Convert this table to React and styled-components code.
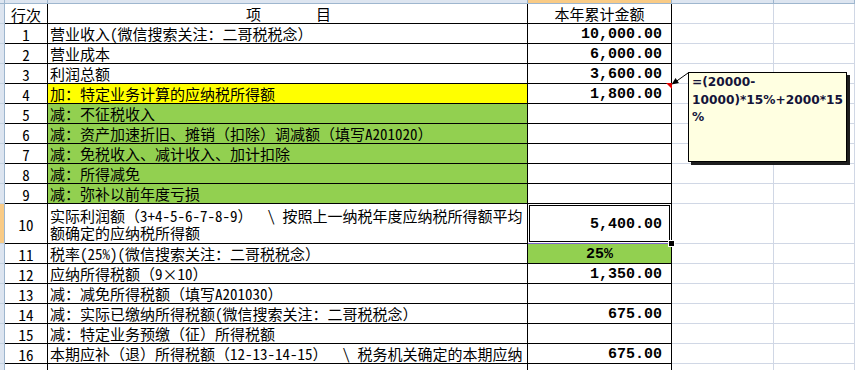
import React from 'react';
import styled, { createGlobalStyle, css } from 'styled-components';

const GlobalStyle = createGlobalStyle`
  html, body { margin: 0; padding: 0; background: #fff; overflow: hidden; }
  body { width: 855px; height: 370px; }
`;

const CJK = `"Noto Sans Mono CJK SC", "Noto Sans CJK SC", sans-serif`;
const HEAD_BG = '#dde5f0';
const HEAD_LINE = '#9eb6ce';
const ACTIVE = '#f9cb86';
const GRID = '#d0d7e5';
const FILLS = { yellow: '#ffff00', green: '#92d050' };

const Sheet = styled.div`
  position: relative;
  width: 855px;
  height: 370px;
  overflow: hidden;
  display: grid;
  grid-template-columns: 5px 43px 480px 144px 102px 1fr;
  grid-template-rows: 4px repeat(10, 20px) 40px repeat(6, 20px) 20px;
  font-family: ${CJK};
  font-size: 15px;
  line-height: 16px;
  color: #000;
`;

const box = css`
  box-sizing: border-box;
  border-right: 1px solid ${GRID};
  border-bottom: 1px solid ${GRID};
  min-width: 0;
  overflow: hidden;
  white-space: pre;
`;

const ColHead = styled.div`
  ${box};
  background: ${p => (p.$active ? ACTIVE : HEAD_BG)};
  border-color: ${HEAD_LINE};
`;

const RowHead = styled.div`
  ${box};
  background: ${p => (p.$active ? ACTIVE : HEAD_BG)};
  border-right-color: ${HEAD_LINE};
  border-bottom-color: #c5d3e3;
`;

const NumCell = styled.div`
  ${box};
  border-right-color: #000;
  border-bottom-color: ${p => (p.$open ? GRID : '#000')};
  display: flex;
  align-items: center;
  justify-content: center;
  padding-top: 2px;
`;

const ItemCell = styled.div`
  ${box};
  border-right-color: #000;
  border-bottom-color: ${p => (p.$open ? GRID : '#000')};
  background: ${p => (p.$fill ? FILLS[p.$fill] : 'transparent')};
  display: flex;
  flex-direction: column;
  justify-content: center;
  align-items: ${p => (p.$center ? 'center' : 'flex-start')};
  padding-left: 2px;
  line-height: 17px;
`;

const Line = styled.span`
  display: block;
  height: 17px;
`;

const HeadTitle = styled.div`
  display: flex;
  gap: 55px;
  line-height: 16px;
`;

const AmtCell = styled.div`
  ${box};
  position: relative;
  overflow: visible;
  border-right-color: #000;
  border-bottom-color: ${p => (p.$selected ? '#7b63c9' : p.$open ? GRID : '#000')};
  background: ${p => (p.$fill ? FILLS[p.$fill] : 'transparent')};
  display: flex;
  align-items: center;
  justify-content: ${p => (p.$align === 'center' ? 'center' : 'flex-end')};
  padding: 3px 9px 0 0;
  font-family: ${p => (p.$head ? CJK : `"Liberation Mono", "DejaVu Sans Mono", monospace`)};
  font-weight: ${p => (p.$head ? 400 : 700)};
  padding-right: ${p => (p.$align === 'center' ? 0 : 9)}px;
  ${p => p.$head && css`padding-top: 0;`}
  ${p =>
    p.$selected &&
    css`
      box-shadow: inset 0 0 0 1px #fff, inset 0 0 0 2px #000;
    `}
  ${p =>
    p.$note &&
    css`
      &::after {
        content: '';
        position: absolute;
        top: -1px;
        right: -1px;
        border-left: 6px solid transparent;
        border-top: 6px solid #e00000;
      }
    `}
`;

const FillHandle = styled.span`
  position: absolute;
  right: -4px;
  bottom: -4px;
  width: 5px;
  height: 5px;
  background: #000;
  border: 1px solid #fff;
  z-index: 2;
`;

const Blank = styled.div`
  ${box};
`;

const Note = styled.div`
  position: absolute;
  left: 688px;
  top: 72px;
  width: 159px;
  height: 90px;
  box-sizing: border-box;
  border: 1px solid #000;
  background: #ffffe1;
  box-shadow: 3px 3px 0 #1e1e1e;
  padding: 1px 0 0 3px;
  font-family: "DejaVu Sans", "Liberation Sans", sans-serif;
  font-weight: 700;
  font-size: 12.2px;
  line-height: 17.5px;
  color: #14143a;
  white-space: pre;
  z-index: 3;
`;

const Arrow = styled.svg`
  position: absolute;
  left: 665px;
  top: 68px;
  width: 30px;
  height: 25px;
  overflow: visible;
  z-index: 4;
`;

const rows = [
  { n: '1', t: ['营业收入(微信搜索关注：二哥税税念）'], v: '10,000.00' },
  { n: '2', t: ['营业成本'], v: '6,000.00' },
  { n: '3', t: ['利润总额'], v: '3,600.00' },
  { n: '4', t: ['加：特定业务计算的应纳税所得额'], v: '1,800.00', fill: 'yellow', note: true },
  { n: '5', t: ['减：不征税收入'], fill: 'green' },
  { n: '6', t: ['减：资产加速折旧、摊销（扣除）调减额（填写A201020）'], fill: 'green' },
  { n: '7', t: ['减：免税收入、减计收入、加计扣除'], fill: 'green' },
  { n: '8', t: ['减：所得减免'], fill: 'green' },
  { n: '9', t: ['减：弥补以前年度亏损'], fill: 'green' },
  {
    n: '10',
    t: ['实际利润额（3+4-5-6-7-8-9）  \\ 按照上一纳税年度应纳税所得额平均', '额确定的应纳税所得额'],
    v: '5,400.00',
    selected: true,
  },
  { n: '11', t: ['税率(25%)(微信搜索关注：二哥税税念）'], v: '25%', vfill: 'green', align: 'center' },
  { n: '12', t: ['应纳所得税额（9×10）'], v: '1,350.00' },
  { n: '13', t: ['减：减免所得税额（填写A201030）'] },
  { n: '14', t: ['减：实际已缴纳所得税额(微信搜索关注：二哥税税念）'], v: '675.00' },
  { n: '15', t: ['减：特定业务预缴（征）所得税额'] },
  { n: '16', t: ['本期应补（退）所得税额（12-13-14-15）  \\ 税务机关确定的本期应纳'], v: '675.00' },
];

export default function App() {
  return (
    <>
      <GlobalStyle />
      <Sheet>
        <ColHead />
        <ColHead />
        <ColHead />
        <ColHead $active />
        <ColHead />
        <ColHead />

        <RowHead />
        <NumCell>行次</NumCell>
        <ItemCell $center>
          <HeadTitle>
            <span>项</span>
            <span>目</span>
          </HeadTitle>
        </ItemCell>
        <AmtCell $head $align="center">本年累计金额</AmtCell>
        <Blank />
        <Blank />

        {rows.map(r => (
          <React.Fragment key={r.n}>
            <RowHead $active={r.selected} />
            <NumCell>{r.n}</NumCell>
            <ItemCell $fill={r.fill}>
              {r.t.map((line, i) => (
                <Line key={i}>{line}</Line>
              ))}
            </ItemCell>
            <AmtCell $fill={r.vfill} $align={r.align} $selected={r.selected} $note={r.note}>
              {r.v || ''}
              {r.selected && <FillHandle />}
            </AmtCell>
            <Blank />
            <Blank />
          </React.Fragment>
        ))}

        <RowHead />
        <NumCell $open />
        <ItemCell $open />
        <AmtCell $open />
        <Blank />
        <Blank />

        <Arrow viewBox="0 0 30 25">
          <line x1="23" y1="5" x2="11" y2="13.5" stroke="#000" strokeWidth="1" />
          <polygon points="6.5,16.5 13.95,14.96 10.53,10.04" fill="#000" />
        </Arrow>
        <Note>{'=(20000-\n10000)*15%+2000*15\n%'}</Note>
      </Sheet>
    </>
  );
}
